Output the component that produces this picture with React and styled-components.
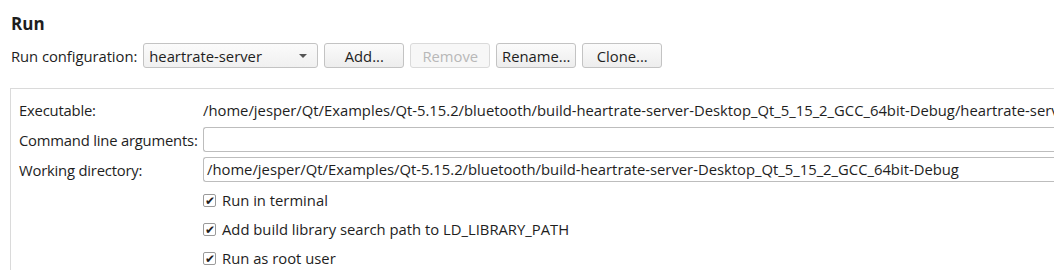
import styled, { createGlobalStyle } from 'styled-components';

const GlobalStyle = createGlobalStyle`
  body {
    margin: 0;
    background: #ffffff;
    font-family: 'Open Sans', 'Noto Sans', sans-serif;
    font-size: 14.8px;
    color: #1e1e1e;
    overflow: hidden;
  }
`;

const WORKDIR =
  '/home/jesper/Qt/Examples/Qt-5.15.2/bluetooth/build-heartrate-server-Desktop_Qt_5_15_2_GCC_64bit-Debug';

export default function App() {
  return (
    <Page>
      <GlobalStyle />
      <Title>Run</Title>
      <ConfigRow>
        <span>Run configuration:</span>
        <Combo>
          <span>heartrate-server</span>
          <Arrow />
        </Combo>
        <Button>Add...</Button>
        <Button disabled>Remove</Button>
        <Button>Rename...</Button>
        <Button>Clone...</Button>
      </ConfigRow>
      <Panel>
        <Form>
          <Label>Executable:</Label>
          <Value>{WORKDIR}/heartrate-server</Value>
          <Label>Command line arguments:</Label>
          <Field />
          <Label>Working directory:</Label>
          <Field>{WORKDIR}</Field>
        </Form>
        <Checks>
          <Check>
            <Box>✔</Box>Run in terminal
          </Check>
          <Check>
            <Box>✔</Box>Add build library search path to LD_LIBRARY_PATH
          </Check>
          <Check>
            <Box>✔</Box>Run as root user
          </Check>
        </Checks>
      </Panel>
    </Page>
  );
}

const Page = styled.div`
  width: 1054px;
  height: 270px;
  padding: 13px 0 0 11px;
  box-sizing: border-box;
  overflow: hidden;
`;

const Title = styled.div`
  font-weight: bold;
  font-size: 17px;
  line-height: 22px;
`;

const ConfigRow = styled.div`
  display: flex;
  align-items: center;
  gap: 6px;
  margin-top: 8px;
  height: 25px;
  > span {
    white-space: nowrap;
    letter-spacing: -0.05px;
  }
`;

const Combo = styled.div`
  width: 175px;
  height: 25px;
  box-sizing: border-box;
  border: 1px solid #c3c3c3;
  border-radius: 3px;
  background: linear-gradient(#fbfbfb, #f0f0f0);
  display: flex;
  align-items: center;
  justify-content: space-between;
  padding: 0 10px 0 5px;
`;

const Arrow = styled.span`
  width: 0;
  height: 0;
  border-left: 4px solid transparent;
  border-right: 4px solid transparent;
  border-top: 4px solid #555;
`;

const Button = styled.button`
  width: 80px;
  height: 25px;
  box-sizing: border-box;
  border: 1px solid #c3c3c3;
  border-radius: 3px;
  background: linear-gradient(#fbfbfb, #ededed);
  font: inherit;
  color: #1e1e1e;
  padding: 0;
  &:disabled {
    color: #b8b8b8;
    border-color: #dadada;
    background: #f7f7f7;
  }
`;

const Panel = styled.div`
  margin-top: 20px;
  margin-left: -1px;
  border: 1px solid #dadada;
  border-right: none;
  padding: 9px 0 0 8px;
  height: 200px;
`;

const Form = styled.div`
  display: grid;
  grid-template-columns: 184px 1fr;
  row-gap: 5px;
  align-items: center;
`;

const Label = styled.div`
  white-space: nowrap;
  letter-spacing: -0.2px;
`;

const Value = styled.div`
  white-space: nowrap;
  height: 24px;
  line-height: 24px;
  overflow: hidden;
`;

const Field = styled.div`
  height: 25px;
  box-sizing: border-box;
  border: 1px solid #bdbdbd;
  border-right: none;
  border-radius: 3px 0 0 3px;
  line-height: 23px;
  padding-left: 3px;
  white-space: nowrap;
  overflow: hidden;
`;

const Checks = styled.div`
  display: flex;
  flex-direction: column;
  gap: 11px;
  margin: 9px 0 0 184px;
`;

const Check = styled.div`
  display: flex;
  align-items: center;
  gap: 6px;
  height: 18px;
  white-space: nowrap;
`;

const Box = styled.span`
  width: 13px;
  height: 13px;
  box-sizing: border-box;
  border: 1px solid #9a9a9a;
  border-radius: 2px;
  background: #fff;
  font-size: 12px;
  line-height: 11px;
  text-align: center;
  color: #1e1e1e;
`;
